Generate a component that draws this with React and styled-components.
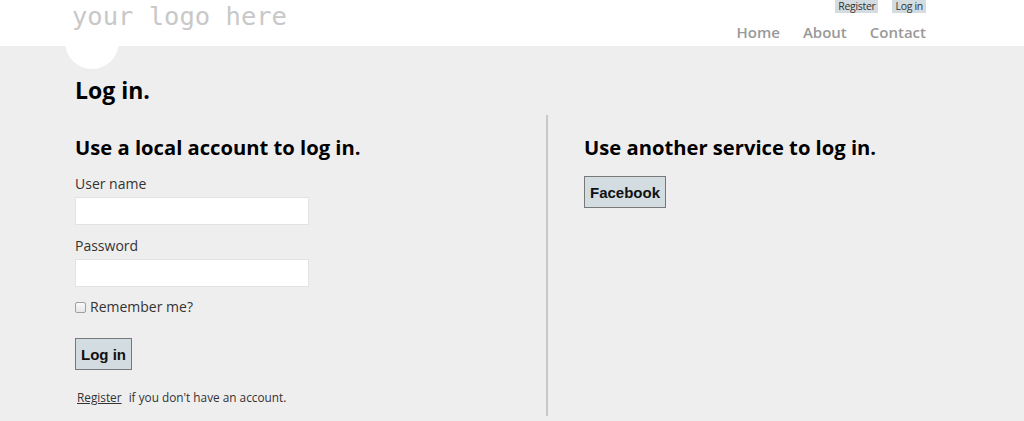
import React from "react";
import styled, { createGlobalStyle } from "styled-components";

const Global = createGlobalStyle`
  html, body { margin: 0; padding: 0; }
  body {
    background: #efeeef;
    font-family: "Open Sans", "Noto Sans", sans-serif;
    color: #333;
    height: 421px;
    overflow: hidden;
  }
`;

const Header = styled.header`
  position: relative;
  background: #fff;
  height: 46px;
`;

const HeaderInner = styled.div`
  display: flex;
  justify-content: space-between;
  padding: 0 98px 0 72px;
  height: 100%;
  position: relative;
  z-index: 1;
`;

const Logo = styled.p`
  margin: 0;
  font-family: "DejaVu Sans Mono", "Liberation Mono", monospace;
  font-size: 25.5px;
  line-height: 1;
  color: #c8c8c8;
  padding-top: 4px;
`;

const Circle = styled.div`
  position: absolute;
  left: 65px;
  top: 15px;
  width: 54px;
  height: 54px;
  border-radius: 50%;
  background: #fff;
  z-index: 0;
`;

const RightSide = styled.div`
  display: flex;
  flex-direction: column;
  align-items: flex-end;
`;

const SmallLinks = styled.div`
  display: flex;
  gap: 14px;
`;

const SmallLink = styled.a`
  background: #d3dce0;
  font-size: 10.5px;
  line-height: 13px;
  padding: 0 3px;
  color: #333;
  text-decoration: none;
  letter-spacing: -0.3px;
`;

const Nav = styled.nav`
  display: flex;
  gap: 23px;
  margin-top: 9px;
`;

const NavLink = styled.a`
  font-size: 15px;
  font-weight: 600;
  color: #999;
  text-decoration: none;
  line-height: 20px;
`;

const Main = styled.main`
  padding: 0 0 0 75px;
`;

const Title = styled.h1`
  margin: 0;
  padding-top: 28px;
  font-size: 23px;
  font-weight: 700;
  color: #000;
  line-height: 32px;
`;

const Columns = styled.div`
  display: flex;
  margin-top: 9px;
`;

const LoginSection = styled.section`
  width: 473px;
  border-right: 2px solid #c8c8c8;
  height: 301px;
  box-sizing: border-box;
`;

const SocialSection = styled.section`
  margin-left: 36px;
`;

const SectionTitle = styled.h2`
  margin: 17px 0 0;
  font-size: 20.2px;
  font-weight: 700;
  color: #000;
  line-height: 30px;
`;

const Label = styled.label`
  display: block;
  font-size: 14px;
  line-height: 20px;
  color: #333;
  margin-top: ${(p) => p.$mt || 0}px;
`;

const Input = styled.input`
  display: block;
  box-sizing: border-box;
  width: 234px;
  height: 28px;
  margin-top: 3px;
  border: 1px solid #e2e2e2;
  background: #fff;
  outline: none;
`;

const CheckRow = styled.div`
  display: flex;
  align-items: center;
  margin-top: 10px;
  gap: 4px;
`;

const Check = styled.span`
  width: 9px;
  height: 9px;
  border: 1px solid #a0a0a0;
  border-radius: 2px;
  background: linear-gradient(#fafafa, #e6e6e6);
`;

const CheckLabel = styled.span`
  font-size: 14px;
  color: #333;
  line-height: 20px;
`;

const Button = styled.button`
  display: block;
  font-family: "Liberation Sans", Arial, sans-serif;
  font-weight: 700;
  font-size: 15px;
  color: #111;
  background: #d3dce0;
  border: 1px solid #787878;
  padding: 0 5px;
  height: 32px;
  margin-top: ${(p) => p.$mt || 0}px;
`;

const Footnote = styled.p`
  margin: 19px 0 0 2px;
  font-size: 11.8px;
  line-height: 16px;
  color: #333;
`;

const FootLink = styled.a`
  color: #333;
  text-decoration: underline;
  margin-right: 4px;
`;

export default function App() {
  return (
    <>
      <Global />
      <Header>
        <Circle />
        <HeaderInner>
          <Logo>your logo here</Logo>
          <RightSide>
            <SmallLinks>
              <SmallLink href="#">Register</SmallLink>
              <SmallLink href="#">Log in</SmallLink>
            </SmallLinks>
            <Nav>
              <NavLink href="#">Home</NavLink>
              <NavLink href="#">About</NavLink>
              <NavLink href="#">Contact</NavLink>
            </Nav>
          </RightSide>
        </HeaderInner>
      </Header>
      <Main>
        <Title>Log in.</Title>
        <Columns>
          <LoginSection>
            <SectionTitle>Use a local account to log in.</SectionTitle>
            <Label $mt={12}>User name</Label>
            <Input type="text" />
            <Label $mt={11}>Password</Label>
            <Input type="password" />
            <CheckRow>
              <Check />
              <CheckLabel>Remember me?</CheckLabel>
            </CheckRow>
            <Button $mt={21}>Log in</Button>
            <Footnote>
              <FootLink href="#">Register</FootLink> if you don't have an account.
            </Footnote>
          </LoginSection>
          <SocialSection>
            <SectionTitle>Use another service to log in.</SectionTitle>
            <Button $mt={14}>Facebook</Button>
          </SocialSection>
        </Columns>
      </Main>
    </>
  );
}
